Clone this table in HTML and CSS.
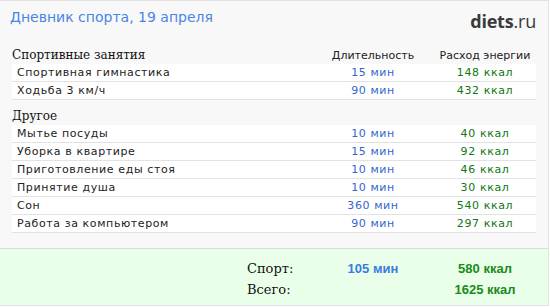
FILE: index.html
```html
<!DOCTYPE html>
<html lang="ru">
<head>
<meta charset="utf-8">
<link rel="stylesheet" href="styles.css">
</head>
<body>
<div class="panel">
  <div class="top">
    <div class="title">Дневник спорта, 19 апреля</div>
    <div class="logo"><b>diets</b>.ru</div>
  </div>
  <div class="content">
    <div class="group">
      <div class="head">
        <span class="cat">Спортивные занятия</span>
        <span class="colh">Длительность</span>
        <span class="colh">Расход энергии</span>
      </div>
      <div class="row"><span class="name">Спортивная гимнастика</span><span class="dur">15 мин</span><span class="kcal">148 ккал</span></div>
      <div class="row"><span class="name">Ходьба 3 км/ч</span><span class="dur">90 мин</span><span class="kcal">432 ккал</span></div>
    </div>
    <div class="group second">
      <div class="head">
        <span class="cat">Другое</span>
      </div>
      <div class="row"><span class="name">Мытье посуды</span><span class="dur">10 мин</span><span class="kcal">40 ккал</span></div>
      <div class="row"><span class="name">Уборка в квартире</span><span class="dur">15 мин</span><span class="kcal">92 ккал</span></div>
      <div class="row"><span class="name">Приготовление еды стоя</span><span class="dur">10 мин</span><span class="kcal">46 ккал</span></div>
      <div class="row"><span class="name">Принятие душа</span><span class="dur">10 мин</span><span class="kcal">30 ккал</span></div>
      <div class="row"><span class="name">Сон</span><span class="dur">360 мин</span><span class="kcal">540 ккал</span></div>
      <div class="row"><span class="name">Работа за компьютером</span><span class="dur">90 мин</span><span class="kcal">297 ккал</span></div>
    </div>
  </div>
  <div class="footer">
    <div class="frow"><span class="flabel">Спорт:</span><span class="fdur">105 мин</span><span class="fkcal">580 ккал</span></div>
    <div class="frow"><span class="flabel">Всего:</span><span class="fdur"></span><span class="fkcal">1625 ккал</span></div>
  </div>
</div>
</body>
</html>
```

FILE: styles.css
```css
html, body {
  margin: 0;
  padding: 0;
  background: #ffffff;
}

.panel {
  width: 549px;
  height: 306px;
  background: #f8f8f8;
  border-top: 1px solid #e2e2e2;
  border-right: 1px solid #e2e2e2;
  display: flex;
  flex-direction: column;
  box-sizing: border-box;
}

.top {
  display: flex;
  justify-content: space-between;
  align-items: flex-start;
  height: 45px;
  padding: 6px 12px 0 10px;
  box-sizing: border-box;
}

.title {
  font-family: "DejaVu Sans", Verdana, sans-serif;
  font-size: 14px;
  color: #4a85e6;
  line-height: 20px;
}

.logo {
  font-family: "Open Sans", "DejaVu Sans", sans-serif;
  font-size: 18px;
  color: #3a3a3a;
  line-height: 22px;
  margin-top: 3px;
  letter-spacing: -0.2px;
}

.logo b {
  font-weight: 700;
}

.content {
  padding: 0 12px;
  flex: 1;
}

.second {
  margin-top: 7px;
}

.head, .row {
  display: grid;
  grid-template-columns: 1fr 122px 102px;
  align-items: center;
}

.head {
  height: 18px;
}

.cat {
  font-family: "DejaVu Serif", serif;
  font-size: 12px;
  color: #111;
}

.colh {
  font-family: "DejaVu Sans", Verdana, sans-serif;
  font-size: 11px;
  color: #222;
  text-align: center;
}

.row {
  height: 18px;
  background: #ffffff;
  border-bottom: 1px solid #e2e2e2;
  box-sizing: border-box;
  font-family: "DejaVu Sans", Verdana, sans-serif;
  font-size: 11px;
  letter-spacing: 0.6px;
}

.name {
  padding-left: 5px;
  color: #222;
}

.dur {
  text-align: center;
  color: #3366cc;
}

.kcal {
  text-align: center;
  color: #117711;
}

.footer {
  background: #eaffea;
  border-top: 1px solid #d2e2d2;
  border-bottom: 1px solid #e2e2e2;
  height: 58px;
  box-sizing: border-box;
  padding: 9px 12px 0 12px;
}

.frow {
  display: grid;
  grid-template-columns: 1fr 122px 102px;
  align-items: center;
  height: 21px;
}

.flabel {
  font-family: "DejaVu Serif", serif;
  font-size: 13px;
  color: #111;
  padding-left: 235px;
}

.fdur, .fkcal {
  font-family: "Liberation Sans", Arial, sans-serif;
  font-weight: bold;
  font-size: 13px;
  text-align: center;
}

.fdur {
  color: #3a7be0;
}

.fkcal {
  color: #1a8a1a;
}
```
